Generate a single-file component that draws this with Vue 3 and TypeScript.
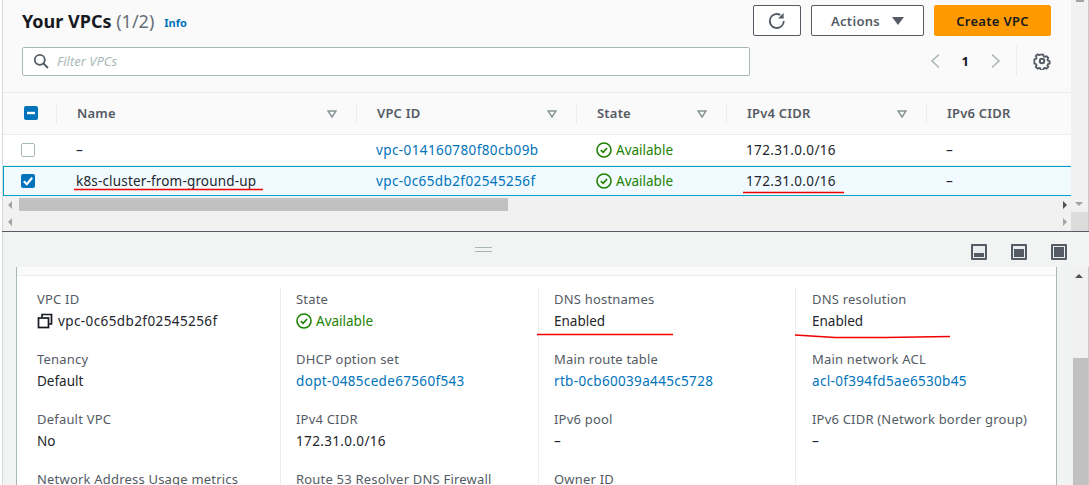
<template>
  <div class="page">
    <!-- VPC list -->
    <section class="list">
      <div class="list-main">
        <div class="head">
          <h1 class="title">Your VPCs <span class="count">(1/2)</span></h1>
          <a class="info">Info</a>
          <div class="actions">
            <button class="btn btn-icon">
              <svg width="18" height="18" viewBox="0 0 18 18" fill="none" stroke="#545b64" stroke-width="1.8">
                <path d="M15.8 9A7 7 0 1 1 12.4 3" />
                <path d="M15.6 1v5.6H10z" fill="#545b64" stroke="none" />
              </svg>
            </button>
            <button class="btn btn-actions">Actions <span class="caret"></span></button>
            <button class="btn btn-primary">Create VPC</button>
          </div>
        </div>
        <div class="tools">
          <div class="filter">
            <svg width="16" height="16" viewBox="0 0 16 16" fill="none" stroke="#545b64" stroke-width="1.8">
              <circle cx="6.8" cy="6.8" r="5" />
              <path d="M10.5 10.5l4.5 4.5" />
            </svg>
            <span class="placeholder">Filter VPCs</span>
          </div>
          <div class="pager">
            <svg width="12" height="16" viewBox="0 0 12 16" fill="none" stroke="#aab7b8" stroke-width="1.6"><path d="M10 1.5L3 8l7 6.5" /></svg>
            <span class="page-no">1</span>
            <svg width="12" height="16" viewBox="0 0 12 16" fill="none" stroke="#aab7b8" stroke-width="1.6"><path d="M2 1.5L9 8l-7 6.5" /></svg>
          </div>
          <div class="prefs">
            <svg width="18" height="18" viewBox="0 0 18 18" fill="none" stroke="#545b64" stroke-width="2">
              <circle cx="9" cy="9" r="2.2" />
              <path d="M7.5 2h3l.4 1.9 1.4.6 1.7-1 2 2.1-1 1.6.6 1.5 1.9.4v2.9l-1.9.4-.6 1.5 1 1.6-2 2.1-1.7-1-1.4.6-.4 1.9h-3l-.4-1.9-1.4-.6-1.7 1-2-2.1 1-1.6-.6-1.5-1.9-.4V7.1l1.9-.4.6-1.5-1-1.6 2-2.1 1.7 1 1.4-.6z" transform="translate(0.9 0.9) scale(0.9)" stroke-linejoin="round" />
            </svg>
          </div>
        </div>

        <div class="table">
          <div class="row row-head">
            <div class="cell cell-check">
              <span class="check check-on">
                <svg width="14" height="14" viewBox="0 0 14 14"><path d="M3 7h8" stroke="#fff" stroke-width="2.4" /></svg>
              </span>
            </div>
            <div v-for="col in columns" :key="col.label" class="cell cell-head">
              <span>{{ col.label }}</span>
              <svg v-if="col.sort" class="sort" width="10" height="8" viewBox="0 0 10 8" fill="none" stroke="#879596" stroke-width="1.5"><path d="M1 1h8L5 7z" /></svg>
            </div>
          </div>
          <div v-for="r in rows" :key="r.id" class="row" :class="{ 'row-selected': r.selected }">
            <div class="cell cell-check">
              <span class="check" :class="{ 'check-on': r.selected }">
                <svg v-if="r.selected" width="14" height="14" viewBox="0 0 14 14" fill="none"><path d="M2.8 7.2l3 3 5.4-6.4" stroke="#fff" stroke-width="2.2" /></svg>
              </span>
            </div>
            <div class="cell text-name">{{ r.name }}</div>
            <div class="cell"><a class="link">{{ r.id }}</a></div>
            <div class="cell status">
              <svg width="16" height="16" viewBox="0 0 16 16" fill="none" stroke="#1d8102" stroke-width="1.6"><circle cx="8" cy="8" r="7" /><path d="M4.8 8.2l2.3 2.2 4-4.4" /></svg>
              Available
            </div>
            <div class="cell text-num">{{ r.cidr }}</div>
            <div class="cell">–</div>
          </div>
        </div>

        <div class="hscroll">
          <span class="arrow arrow-left"></span>
          <div class="hscroll-track"><div class="hscroll-thumb"></div></div>
          <span class="arrow arrow-right"></span>
        </div>
        <div class="hscroll hscroll-outer">
          <span class="arrow arrow-left"></span>
          <span class="arrow arrow-right arrow-dim"></span>
        </div>
      </div>
      <div class="vscroll-top">
        <div class="vscroll-nub"></div>
        <span class="arrow-down"></span>
        <div class="vscroll-corner"></div>
      </div>
    </section>

    <!-- Split panel -->
    <section class="split">
      <div class="split-bar">
        <span class="grip"></span>
        <div class="split-icons">
          <span class="pos pos-bottom"></span>
          <span class="pos pos-top"></span>
          <span class="pos pos-full"></span>
        </div>
      </div>
      <div class="split-body">
        <div class="card">
          <div class="card-strip"></div>
          <div class="details">
            <div v-for="(col, i) in details" :key="i" class="detail-col">
              <div v-for="item in col" :key="item.label" class="detail">
                <div class="detail-label">{{ item.label }}</div>
                <div v-if="item.value" class="detail-value" :class="item.kind">
                  <svg v-if="item.kind === 'copy'" width="16" height="16" viewBox="0 0 16 16" fill="none" stroke="#16191f" stroke-width="1.7"><path d="M5 4V1.5h9.5V11H12" /><rect x="1.5" y="5" width="10" height="9.5" /></svg>
                  <svg v-if="item.kind === 'status'" width="16" height="16" viewBox="0 0 16 16" fill="none" stroke="#1d8102" stroke-width="1.6"><circle cx="8" cy="8" r="7" /><path d="M4.8 8.2l2.3 2.2 4-4.4" /></svg>
                  {{ item.value }}
                </div>
              </div>
            </div>
          </div>
        </div>
        <div class="vscroll">
          <span class="arrow-up"></span>
          <div class="vscroll-thumb"></div>
        </div>
      </div>
    </section>

    <!-- Red marker lines drawn on the screenshot -->
    <svg class="marks" width="1089" height="485" viewBox="0 0 1089 485" fill="none" stroke="#f00000" stroke-width="1.6">
      <path d="M74 189.5h189" />
      <path d="M743 192.5h101" />
      <path d="M537 334.5h136" />
      <path d="M795 335l40 2.5h50l65-1" />
    </svg>
  </div>
</template>

<script setup lang="ts">
interface Detail {
  label: string;
  value?: string;
  kind?: string;
}

const columns = [
  { label: 'Name', sort: true },
  { label: 'VPC ID', sort: true },
  { label: 'State', sort: true },
  { label: 'IPv4 CIDR', sort: true },
  { label: 'IPv6 CIDR', sort: false },
];

const rows = [
  { name: '–', id: 'vpc-014160780f80cb09b', cidr: '172.31.0.0/16', selected: false },
  { name: 'k8s-cluster-from-ground-up', id: 'vpc-0c65db2f02545256f', cidr: '172.31.0.0/16', selected: true },
];

const details: Detail[][] = [
  [
    { label: 'VPC ID', value: 'vpc-0c65db2f02545256f', kind: 'copy' },
    { label: 'Tenancy', value: 'Default' },
    { label: 'Default VPC', value: 'No' },
    { label: 'Network Address Usage metrics' },
  ],
  [
    { label: 'State', value: 'Available', kind: 'status' },
    { label: 'DHCP option set', value: 'dopt-0485cede67560f543', kind: 'link' },
    { label: 'IPv4 CIDR', value: '172.31.0.0/16', kind: 'text-num' },
    { label: 'Route 53 Resolver DNS Firewall' },
  ],
  [
    { label: 'DNS hostnames', value: 'Enabled' },
    { label: 'Main route table', value: 'rtb-0cb60039a445c5728', kind: 'link' },
    { label: 'IPv6 pool', value: '–' },
    { label: 'Owner ID' },
  ],
  [
    { label: 'DNS resolution', value: 'Enabled' },
    { label: 'Main network ACL', value: 'acl-0f394fd5ae6530b45', kind: 'link' },
    { label: 'IPv6 CIDR (Network border group)', value: '–' },
  ],
];
</script>

<style>
html,
body {
  margin: 0;
  overflow: hidden;
}
</style>

<style scoped>
.page {
  position: relative;
  width: 1089px;
  height: 485px;
  overflow: hidden;
  font-family: "Noto Sans", "Open Sans", sans-serif;
  font-size: 13.5px;
  color: #22262c;
  background: #fff;
}

.list {
  display: flex;
  height: 231px;
  border-bottom: 1px solid #545b64;
  margin-left: 2px;
}

.list-main {
  flex: 1;
  min-width: 0;
  background: #fafafa;
  border-left: 1px solid #d5dbdb;
  display: flex;
  flex-direction: column;
}

.head {
  display: flex;
  align-items: center;
  height: 41px;
  padding: 0 20px 0 19px;
}

.title {
  margin: 0;
  font-size: 18px;
  font-weight: 700;
  line-height: 40px;
  color: #16191f;
}

.count {
  font-weight: 400;
  color: #687078;
}

.info {
  margin-left: 10px;
  margin-top: 3px;
  font-size: 11px;
  font-weight: 700;
  color: #0073bb;
}

.actions {
  margin-left: auto;
  display: flex;
  gap: 10px;
}

.btn {
  height: 31px;
  box-sizing: border-box;
  border: 1px solid #545b64;
  border-radius: 2px;
  background: #fff;
  color: #545b64;
  font: 600 13px "Noto Sans", sans-serif;
  letter-spacing: 0.3px;
  padding: 0;
  display: flex;
  align-items: center;
  justify-content: center;
}

.btn-icon {
  width: 48px;
}

.btn-actions {
  width: 113px;
  gap: 12px;
}

.caret {
  width: 0;
  height: 0;
  border-left: 6px solid transparent;
  border-right: 6px solid transparent;
  border-top: 8px solid #545b64;
}

.btn-primary {
  width: 117px;
  background: #ff9900;
  border-color: #ff9900;
  color: #16191f;
}

.tools {
  display: flex;
  align-items: center;
  height: 40px;
  padding-left: 19px;
}

.filter {
  width: 728px;
  height: 29px;
  box-sizing: border-box;
  border: 1px solid #aab7b8;
  border-radius: 2px;
  background: #fff;
  display: flex;
  align-items: center;
  gap: 8px;
  padding-left: 10px;
  font-size: 13px;
}

.placeholder {
  font-style: italic;
  color: #aab7b8;
}

.pager {
  margin-left: auto;
  display: flex;
  align-items: center;
  gap: 21px;
}

.page-no {
  font-weight: 700;
  font-size: 13px;
  color: #16191f;
}

.prefs {
  display: flex;
  align-items: center;
  height: 30px;
  margin-left: 14px;
  padding: 0 20px 0 16px;
  border-left: 1px solid #eaeded;
}

.table {
  margin-top: 11px;
  border-top: 1px solid #eaeded;
}

.row {
  display: grid;
  grid-template-columns: 53px 300px 220px 150px 200px 1fr;
  height: 31px;
  background: #fff;
  box-sizing: border-box;
  border-bottom: 1px solid #eaeded;
}

.row .cell {
  display: flex;
  align-items: center;
  padding-left: 20px;
}

.row .cell-check {
  padding-left: 18px;
}

.row-head {
  height: 42px;
  padding-bottom: 2px;
  background: #fafafa;
  font-size: 13px;
  font-weight: 600;
  letter-spacing: 0.2px;
  color: #545b64;
}

.row-head .cell {
  position: relative;
  padding-left: 21px;
}

.row-head .cell + .cell::before {
  content: "";
  position: absolute;
  left: 0;
  top: 11px;
  bottom: 8px;
  width: 1px;
  background: #eaeded;
}

.sort {
  position: absolute;
  right: 19px;
  top: 17px;
}

.row-selected {
  height: 30px;
  padding-bottom: 1px;
  background: #f1faff;
  border-bottom: 0;
  box-shadow: inset 0 1px 0 #00a1c9, inset 0 -1px 0 #00a1c9, inset 1px 0 0 #00a1c9;
}

.check {
  width: 14px;
  height: 14px;
  box-sizing: border-box;
  border: 1px solid #aab7b8;
  border-radius: 2px;
  background: #fff;
  display: block;
}

.check svg {
  display: block;
}

.check-on {
  background: #0073bb;
  border: 0;
}

.text-name {
  letter-spacing: 0.17px;
}

.text-num {
  letter-spacing: 0.35px;
}

.link {
  letter-spacing: 0.4px;
}

.detail-value.copy {
  letter-spacing: 0.4px;
}

.detail-value.link {
  letter-spacing: 0.33px;
}

.link,
.detail-value.link {
  color: #0073bb;
}

.status {
  color: #1d8102;
  gap: 4px;
}

.hscroll {
  display: flex;
  align-items: center;
  height: 17px;
  background: #f1f1f1;
}

.hscroll-outer {
  flex: 1;
}

.hscroll-track {
  flex: 1;
  height: 100%;
  padding: 2px 0;
  box-sizing: border-box;
}

.hscroll-thumb {
  width: 489px;
  height: 13px;
  margin-left: 7px;
  background: #c1c1c1;
}

.arrow {
  width: 0;
  height: 0;
  border-top: 4px solid transparent;
  border-bottom: 4px solid transparent;
  flex: none;
}

.arrow-left {
  margin-left: 5px;
  border-right: 4px solid #a3a3a3;
}

.arrow-right {
  margin-right: 4px;
  border-left: 4px solid #505050;
}

.arrow-dim.arrow-right {
  margin-left: auto;
  border-left-color: #a3a3a3;
}

.vscroll-top {
  flex: none;
  width: 17px;
  margin-right: 1px;
  background: #f1f1f1;
  box-shadow: 1px 0 0 #c8c8c8;
  display: flex;
  flex-direction: column;
}

.vscroll-nub {
  width: 8px;
  height: 2px;
  margin-left: 5px;
  background: #a3a3a3;
}

.arrow-down {
  width: 0;
  height: 0;
  margin: 200px 0 0 4px;
  border-left: 4px solid transparent;
  border-right: 4px solid transparent;
  border-top: 4px solid #a3a3a3;
}

.vscroll-corner {
  height: 19px;
  margin-top: auto;
  background: #dcdcdc;
}

.split {
  height: 253px;
  background: #f2f3f3;
  display: flex;
  flex-direction: column;
  margin-left: 2px;
  border-left: 1px solid #d5dbdb;
}

.split-bar {
  position: relative;
  flex: none;
  height: 35px;
  display: flex;
  justify-content: flex-end;
  align-items: center;
}

.grip {
  position: absolute;
  left: 472px;
  top: 15px;
  width: 17px;
  height: 3px;
  border-top: 1px solid #aab7b8;
  border-bottom: 1px solid #aab7b8;
}

.split-icons {
  display: flex;
  gap: 24px;
  padding: 4px 22px 0 0;
}

.pos {
  position: relative;
  width: 16px;
  height: 16px;
  box-sizing: border-box;
  border: 2px solid #545b64;
  border-radius: 1px;
  background: #eaeded;
}

.pos::after {
  content: "";
  position: absolute;
  left: 1px;
  right: 1px;
  background: #545b64;
}

.pos-bottom::after {
  bottom: 1px;
  height: 4px;
}

.pos-top::after {
  bottom: 1px;
  height: 8px;
}

.pos-full::after {
  top: 1px;
  bottom: 1px;
}

.split-body {
  flex: 1;
  min-height: 0;
  display: flex;
  padding-left: 13px;
}

.card {
  flex: none;
  width: 1041px;
  box-sizing: border-box;
  background: #fff;
  border-left: 1px solid #aab7b8;
  border-right: 1px solid #aab7b8;
  overflow: hidden;
}

.card-strip {
  height: 8px;
  background: #fafafa;
  border-bottom: 1px solid #eaeded;
}

.details {
  display: grid;
  grid-template-columns: 263px 258px 257px 1fr;
  padding-top: 12px;
}

.detail-col {
  padding: 2px 0 0 15px;
  border-left: 1px solid #eaeded;
  height: 230px;
  box-sizing: border-box;
}

.detail-col:first-child {
  padding-left: 20px;
  border-left: 0;
}

.detail-col:last-child {
  padding-left: 16px;
}

.detail {
  height: 60px;
}

.detail-label {
  line-height: 18px;
  font-size: 13px;
  letter-spacing: 0.2px;
  color: #545b64;
}

.detail-value {
  margin-top: 2px;
  line-height: 22px;
  display: flex;
  align-items: center;
  gap: 5px;
}

.detail-value.status {
  gap: 4px;
}

.vscroll {
  margin-left: 14px;
  width: 17px;
  background: #f1f1f1;
  box-shadow: 1px 0 0 #c8c8c8;
  position: relative;
  flex: none;
}

.arrow-up {
  position: absolute;
  left: 4px;
  top: 7px;
  border-left: 4px solid transparent;
  border-right: 4px solid transparent;
  border-bottom: 4px solid #505050;
}

.vscroll-thumb {
  position: absolute;
  top: 91px;
  bottom: 0;
  left: 2px;
  right: 0;
  background: #c1c1c1;
}

.marks {
  position: absolute;
  left: 0;
  top: 0;
  pointer-events: none;
}
</style>
